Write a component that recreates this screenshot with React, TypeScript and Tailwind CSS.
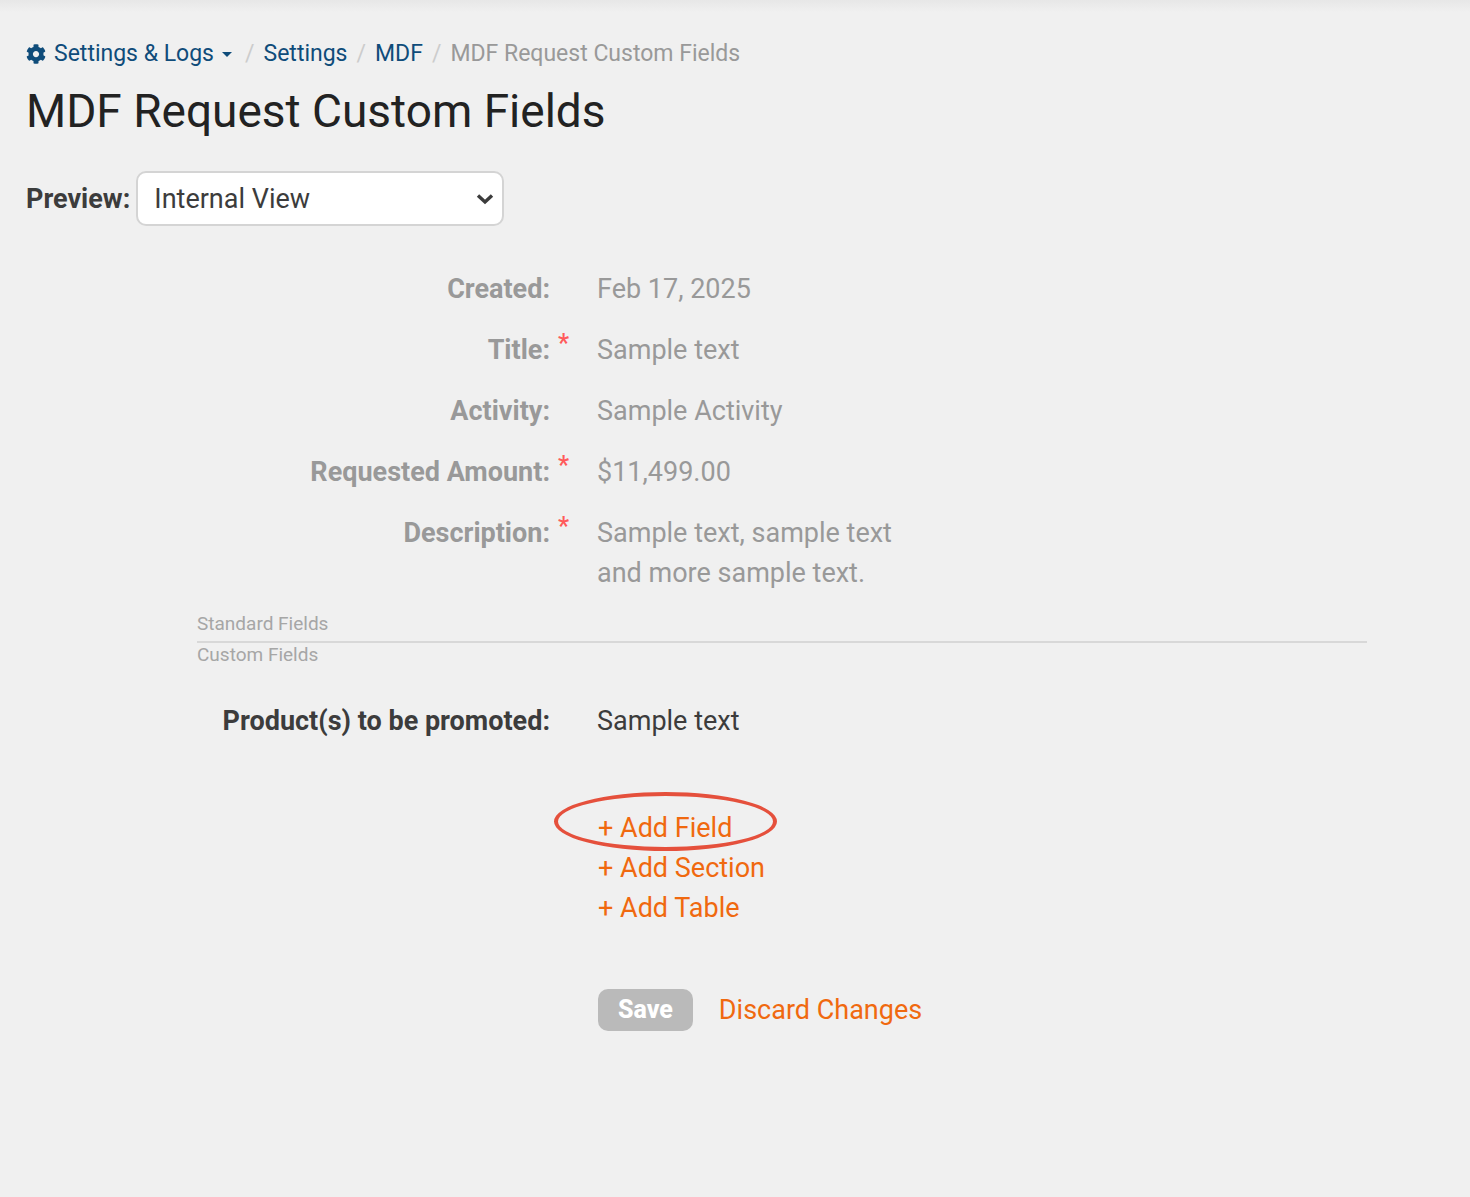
import { useState } from 'react';
import { FaCog } from 'react-icons/fa';

type Field = { label: string; value: string; required?: boolean };

const standardFields: Field[] = [
  { label: 'Created', value: 'Feb 17, 2025' },
  { label: 'Title', value: 'Sample text', required: true },
  { label: 'Activity', value: 'Sample Activity' },
  { label: 'Requested Amount', value: '$11,499.00', required: true },
  { label: 'Description', value: 'Sample text, sample text and more sample text.', required: true },
];

const customFields: Field[] = [{ label: 'Product(s) to be promoted', value: 'Sample text' }];

function FieldRow({ label, value, required }: Field) {
  return (
    <div className="grid grid-cols-[353px_1fr] gap-x-[47px]">
      <dt className="relative text-right font-bold">
        {label}:
        {required && <span className="absolute left-full top-0 pl-2 text-[25px] font-medium leading-7 text-[#ff5a5a]">*</span>}
      </dt>
      <dd className="max-w-[310px]">{value}</dd>
    </div>
  );
}

function Slash() {
  return <span className="text-[#cccccc]">/</span>;
}

export default function App() {
  const [view, setView] = useState('internal');

  return (
    <div className="min-h-screen bg-[#f0f0f0] font-['Roboto',sans-serif] text-[27px] leading-10 text-[#3c3c3c]">
      <div className="h-3 bg-linear-to-b from-[#e7e7e7] to-[#f0f0f0]" />
      <main className="px-[26px] pt-[25px]">
        <nav aria-label="Breadcrumb" className="flex items-center gap-[9px] text-[23px] leading-[34px] text-[#0f4c7a]">
          <button type="button" className="mr-1 flex items-center">
            <FaCog className="mr-2 size-5" />
            Settings &amp; Logs
            <span className="ml-2 border-x-5 border-t-5 border-x-transparent border-t-[#0f4c7a]" />
          </button>
          <Slash />
          <a href="#settings">Settings</a>
          <Slash />
          <a href="#mdf">MDF</a>
          <Slash />
          <span className="text-[#999999]">MDF Request Custom Fields</span>
        </nav>

        <h1 className="mt-3 text-[46px] leading-[56px] text-[#222222]">MDF Request Custom Fields</h1>

        <div className="mt-8 flex items-center gap-[6px]">
          <label htmlFor="preview" className="font-bold">Preview:</label>
          <div className="relative">
            <select
              id="preview"
              value={view}
              onChange={(e) => setView(e.target.value)}
              className="h-[55px] w-[368px] appearance-none rounded-[10px] border-2 border-[#d4d4d4] bg-white px-4"
            >
              <option value="internal">Internal View</option>
              <option value="partner">Partner View</option>
            </select>
            <svg viewBox="0 0 18 12" className="pointer-events-none absolute right-[10px] top-[22px] h-3 w-[18px]" fill="none" stroke="#3c3c3c" strokeWidth="3.4">
              <path d="M2 2.5l7 6.5 7-6.5" />
            </svg>
          </div>
        </div>

        <form className="mt-[43px] ml-[171px] max-w-[1170px]" onSubmit={(e) => e.preventDefault()}>
          <dl className="flex flex-col gap-[21px] text-[#999999]">
            {standardFields.map((f) => <FieldRow key={f.label} {...f} />)}
          </dl>

          <div className="mt-[19px] text-[19px] leading-6 text-[#a6a6a6]">
            <div className="border-b-2 border-[#d8d8d8] pb-[5px]">Standard Fields</div>
            <div>Custom Fields</div>
          </div>

          <dl className="mt-[34px]">
            {customFields.map((f) => <FieldRow key={f.label} {...f} />)}
          </dl>

          <div className="mt-[67px] ml-[401px] text-[#f0690f]">
            <ul>
              <li className="relative">
                <button type="button">+ Add Field</button>
                <span className="pointer-events-none absolute -left-[44px] -top-4 h-[59px] w-[223px] rounded-[50%] border-4 border-[#e5503c]" />
              </li>
              <li><button type="button">+ Add Section</button></li>
              <li><button type="button">+ Add Table</button></li>
            </ul>
            <div className="mt-[61px] flex items-center gap-[26px]">
              <button type="submit" className="h-[42px] rounded-[10px] bg-[#bababa] px-5 text-[25px] font-extrabold text-white">Save</button>
              <button type="button">Discard Changes</button>
            </div>
          </div>
        </form>
      </main>
    </div>
  );
}
